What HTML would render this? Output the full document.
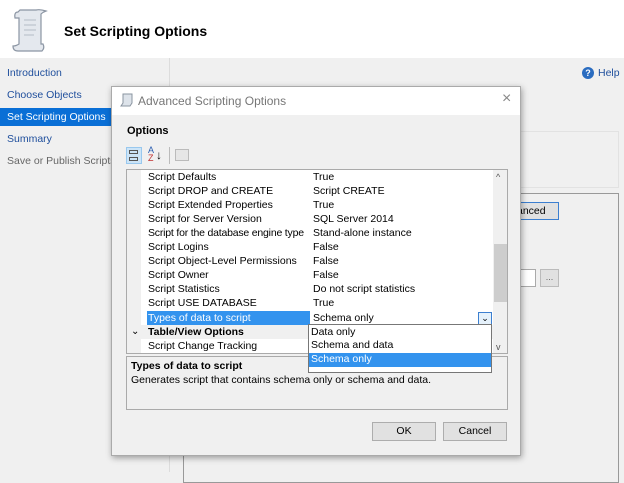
<!DOCTYPE html>
<html><head><style>
*{margin:0;padding:0;box-sizing:border-box}
body{width:624px;height:472px;overflow:hidden;background:#f0f0f0;font-family:"Liberation Sans",sans-serif;font-size:10.5px;color:#000;position:relative}
.a{position:absolute;white-space:nowrap}
.row{position:absolute;left:0;height:14px;line-height:14px;width:350px}
</style></head><body>
<div class="a" style="left:0;top:0;width:624px;height:58px;background:#fff"></div>
<svg class="a" style="left:10px;top:8px" width="40" height="44" viewBox="0 0 40 44"><path d="M8 4 Q4 4 5 10 L9 10 L9 36 Q6 38 3 38 Q3 43 8 43 L32 43 Q35 40 33 36 L31 36 L31 6 Q33 4 36 3 Q30 1 26 2 L10 2 Z" fill="#e4e8ee" stroke="#8b95a3" stroke-width="1.2"/><path d="M14 12h12M14 17h12M14 22h12M14 27h10" stroke="#b5bcc7"/></svg>
<div class="a" style="left:64px;top:23px;font-size:14px;font-weight:bold">Set Scripting Options</div>
<div class="a" style="left:0;top:58px;width:170px;height:414px;background:#f0f0f0;border-right:1px solid #dcdcdc"></div>
<div class="a" style="left:7px;top:67px;color:#1e4e9c">Introduction</div>
<div class="a" style="left:7px;top:89px;color:#1e4e9c">Choose Objects</div>
<div class="a" style="left:0;top:108px;width:112px;height:18px;background:#0a6fd6"></div>
<div class="a" style="left:7px;top:111px;color:#fff">Set Scripting Options</div>
<div class="a" style="left:7px;top:133px;color:#1e4e9c">Summary</div>
<div class="a" style="left:7px;top:155px;color:#666">Save or Publish Scripts</div>
<div class="a" style="left:582px;top:67px;width:12px;height:12px;border-radius:50%;background:#2a6cc0;color:#fff;font-size:9px;text-align:center;line-height:12px;font-weight:bold">?</div>
<div class="a" style="left:598px;top:67px;color:#1e4e9c">Help</div>
<div class="a" style="left:385px;top:131px;width:234px;height:57px;border:1px solid #e2e2e2"></div>
<div class="a" style="left:183px;top:193px;width:436px;height:290px;border:1px solid #999"></div>
<div class="a" style="left:500px;top:202px;width:59px;height:18px;border:1px solid #3c7fd0;background:#e1e1e1;line-height:16px;padding-left:16px">anced</div>
<div class="a" style="left:510px;top:269px;width:26px;height:18px;background:#fff;border:1px solid #aaa"></div>
<div class="a" style="left:540px;top:269px;width:19px;height:18px;background:#e1e1e1;border:1px solid #bbb;text-align:center;line-height:14px;font-size:9px;color:#666">...</div>

<div class="a" style="left:111px;top:86px;width:410px;height:370px;background:#f0f0f0;border:1px solid #aaa;box-shadow:1px 2px 6px rgba(0,0,0,.35)">
 <div class="a" style="left:0;top:0;width:408px;height:28px;background:#fff"></div>
 <svg class="a" style="left:8px;top:6px" width="14" height="14"><path d="M3 1h9v9l-2 3H1l2-3z" fill="#dde3ea" stroke="#8a94a0"/></svg>
 <div class="a" style="left:26px;top:7px;font-size:12px;color:#777">Advanced Scripting Options</div>
 <div class="a" style="left:390px;top:3px;font-size:16px;color:#888">×</div>
 <div class="a" style="left:15px;top:38px;font-weight:bold;font-size:11px">Options</div>
 <div class="a" style="left:14px;top:60px;width:16px;height:17px;background:#cce4f7;border:1px solid #99c8ee"></div>
 <div class="a" style="left:17px;top:63px;width:9px;height:4px;border:1px solid #555"></div>
 <div class="a" style="left:17px;top:70px;width:9px;height:4px;border:1px solid #555"></div>
 <div class="a" style="left:36px;top:59px;font-size:9px;color:#2a5db0;line-height:8px">A<br><span style="color:#c03030">Z</span></div>
 <div class="a" style="left:44px;top:61px;font-size:12px">↓</div>
 <div class="a" style="left:57px;top:60px;width:1px;height:17px;background:#bbb"></div>
 <div class="a" style="left:63px;top:62px;width:14px;height:12px;border:1px solid #bbb;background:#e6e6e6"></div>
 <div class="a" style="left:14px;top:82px;width:382px;height:185px;background:#fff;border:1px solid #aaa;overflow:hidden">
  <div class="a" style="left:0;top:0;width:14px;height:185px;background:#f0f0f0"></div>
  <div class="row" style="top:0"><span class="a" style="left:21px">Script Defaults</span><span class="a" style="left:186px">True</span></div>
  <div class="row" style="top:14px"><span class="a" style="left:21px">Script DROP and CREATE</span><span class="a" style="left:186px">Script CREATE</span></div>
  <div class="row" style="top:28px"><span class="a" style="left:21px">Script Extended Properties</span><span class="a" style="left:186px">True</span></div>
  <div class="row" style="top:42px"><span class="a" style="left:21px">Script for Server Version</span><span class="a" style="left:186px">SQL Server 2014</span></div>
  <div class="row" style="top:56px"><span class="a" style="left:21px;letter-spacing:-0.2px">Script for the database engine type</span><span class="a" style="left:186px">Stand-alone instance</span></div>
  <div class="row" style="top:70px"><span class="a" style="left:21px">Script Logins</span><span class="a" style="left:186px">False</span></div>
  <div class="row" style="top:84px"><span class="a" style="left:21px">Script Object-Level Permissions</span><span class="a" style="left:186px">False</span></div>
  <div class="row" style="top:98px"><span class="a" style="left:21px">Script Owner</span><span class="a" style="left:186px">False</span></div>
  <div class="row" style="top:112px"><span class="a" style="left:21px">Script Statistics</span><span class="a" style="left:186px">Do not script statistics</span></div>
  <div class="row" style="top:126px"><span class="a" style="left:21px">Script USE DATABASE</span><span class="a" style="left:186px">True</span></div>
  <div class="a" style="left:20px;top:141px;width:163px;height:14px;background:#3393ee"></div>
  <div class="row" style="top:141px"><span class="a" style="left:21px;color:#fff">Types of data to script</span><span class="a" style="left:186px">Schema only</span></div>
  <div class="a" style="left:351px;top:142px;width:14px;height:13px;border:1px solid #3c7fd0;background:#e5f1fb;font-size:9px;text-align:center;line-height:11px">⌄</div>
  <div class="row" style="top:155px;background:#f0f0f0;width:400px"><span class="a" style="left:4px;font-size:10px">⌄</span><span class="a" style="left:21px;font-weight:bold">Table/View Options</span></div>
  <div class="row" style="top:169px"><span class="a" style="left:21px">Script Change Tracking</span></div>
  <div class="a" style="left:366px;top:0;width:16px;height:185px;background:#f0f0f0"></div>
  <div class="a" style="left:367px;top:74px;width:13px;height:58px;background:#cdcdcd"></div>
  <div class="a" style="left:369px;top:2px;font-size:9px;color:#555">^</div>
  <div class="a" style="left:369px;top:172px;font-size:9px;color:#555">v</div>
 </div>
 <div class="a" style="left:14px;top:269px;width:382px;height:54px;border:1px solid #aaa"></div>
 <div class="a" style="left:19px;top:273px;font-weight:bold">Types of data to script</div>
 <div class="a" style="left:19px;top:287px">Generates script that contains schema only or schema and data.</div>
 <div class="a" style="left:260px;top:335px;width:64px;height:19px;background:#e1e1e1;border:1px solid #adadad;text-align:center;line-height:17px">OK</div>
 <div class="a" style="left:331px;top:335px;width:64px;height:19px;background:#e1e1e1;border:1px solid #adadad;text-align:center;line-height:17px">Cancel</div>
 <div class="a" style="left:196px;top:237px;width:184px;height:49px;background:#fff;border:1px solid #777">
  <div class="a" style="left:2px;top:1px">Data only</div>
  <div class="a" style="left:2px;top:14px">Schema and data</div>
  <div class="a" style="left:0;top:28px;width:182px;height:14px;background:#3393ee"></div>
  <div class="a" style="left:2px;top:28px;color:#fff">Schema only</div>
 </div>
</div>
</body></html>
